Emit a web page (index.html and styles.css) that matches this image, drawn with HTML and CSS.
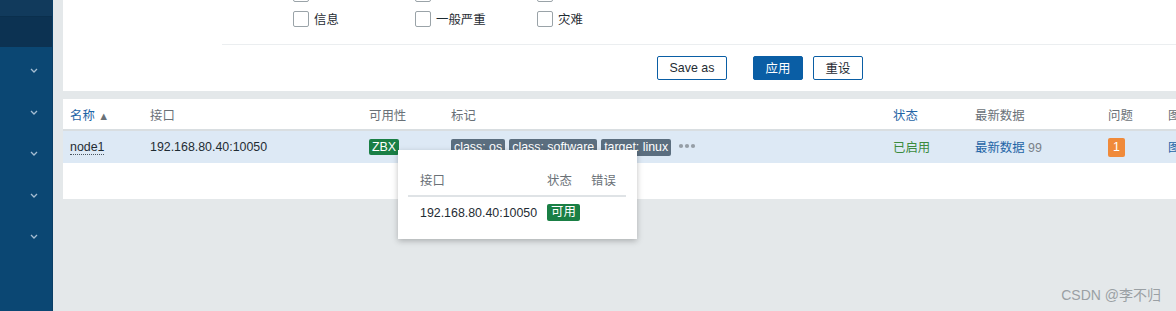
FILE: index.html
```html
<!DOCTYPE html>
<html lang="zh">
<head>
<meta charset="utf-8">
<link rel="stylesheet" href="styles.css">
</head>
<body>
<div class="app">
  <aside class="sidebar">
    <div class="sb-top"></div>
    <div class="sb-band"></div>
    <nav class="sb-menu">
      <div class="sb-item"><svg viewBox="0 0 8 5" class="chev"><path d="M1 1l3 3 3-3"/></svg></div>
      <div class="sb-item"><svg viewBox="0 0 8 5" class="chev"><path d="M1 1l3 3 3-3"/></svg></div>
      <div class="sb-item"><svg viewBox="0 0 8 5" class="chev"><path d="M1 1l3 3 3-3"/></svg></div>
      <div class="sb-item"><svg viewBox="0 0 8 5" class="chev"><path d="M1 1l3 3 3-3"/></svg></div>
      <div class="sb-item"><svg viewBox="0 0 8 5" class="chev"><path d="M1 1l3 3 3-3"/></svg></div>
    </nav>
  </aside>
  <main class="main">
    <section class="filter">
      <div class="sev">
        <div class="sev-label">严重性</div>
        <div class="sev-grid">
          <label class="cb"><span class="box"></span>未分类</label>
          <label class="cb"><span class="box"></span>警告</label>
          <label class="cb"><span class="box"></span>严重</label>
          <label class="cb"><span class="box"></span>信息</label>
          <label class="cb"><span class="box"></span>一般严重</label>
          <label class="cb"><span class="box"></span>灾难</label>
        </div>
      </div>
      <div class="sep"></div>
      <div class="actions">
        <button class="btn btn-alt save">Save as</button>
        <button class="btn btn-main">应用</button>
        <button class="btn btn-alt">重设</button>
      </div>
    </section>

    <section class="list">
      <table class="hosts">
        <colgroup>
          <col class="c1"><col class="c2"><col class="c3"><col class="c4"><col class="c5"><col class="c6"><col class="c7"><col>
        </colgroup>
        <thead>
          <tr>
            <th class="link">名称 <span class="arrow">▲</span></th>
            <th>接口</th>
            <th>可用性</th>
            <th>标记</th>
            <th class="link">状态</th>
            <th>最新数据</th>
            <th>问题</th>
            <th>图</th>
          </tr>
        </thead>
        <tbody>
          <tr class="row">
            <td><span class="node">node1</span></td>
            <td>192.168.80.40:10050</td>
            <td><span class="zbx">ZBX</span></td>
            <td class="tags"><span class="tag">class: os</span><span class="tag">class: software</span><span class="tag">target: linux</span><svg class="more" viewBox="0 0 18 6"><circle cx="3" cy="3" r="2.1"/><circle cx="9" cy="3" r="2.1"/><circle cx="15" cy="3" r="2.1"/></svg></td>
            <td class="enabled">已启用</td>
            <td><span class="link">最新数据</span> <span class="count">99</span></td>
            <td><span class="prob">1</span></td>
            <td class="link">图</td>
          </tr>
        </tbody>
      </table>

      <div class="popup">
        <table class="ptable">
          <thead>
            <tr><th>接口</th><th>状态</th><th>错误</th></tr>
          </thead>
          <tbody>
            <tr><td>192.168.80.40:10050</td><td><span class="ok">可用</span></td><td></td></tr>
          </tbody>
        </table>
      </div>
    </section>
    <div class="watermark">CSDN @李不归</div>
  </main>
</div>
</body>
</html>
```

FILE: styles.css
```css
* { box-sizing: border-box; }
html, body { margin: 0; padding: 0; }
body {
  background: #e4e8ea;
  font-family: "Liberation Sans", Arial, "Noto Sans CJK SC", sans-serif;
  font-size: 12.4px;
  color: #1f2c33;
  width: 1176px;
  height: 311px;
  overflow: hidden;
}
.app { display: flex; height: 311px; }

.sidebar {
  width: 53px;
  flex: 0 0 53px;
  display: flex;
  flex-direction: column;
  background: #0b4773;
  border-right: 1px solid #0a3e66;
}
.sb-top { height: 16px; background: #113a5c; }
.sb-band { height: 31px; background: #0c3252; border-top: 1px solid #0a2f4d; }
.sb-menu { display: flex; flex-direction: column; padding-top: 19px; }
.sb-item { height: 41.5px; display: flex; justify-content: flex-end; padding-right: 14px; }
.chev { width: 8px; height: 5px; margin-top: 2px; }
.chev path { fill: none; stroke: #a5bdd2; stroke-width: 1.3; }

.main { flex: 1; padding-left: 10px; position: relative; }

.filter {
  background: #fff;
  height: 91px;
  display: flex;
  flex-direction: column;
}
.sev { display: flex; margin-top: -14px; padding-left: 178px; }
.sev-label { width: 52px; color: #444; line-height: 16px; }
.sev-grid {
  display: grid;
  grid-template-columns: 122px 122px 122px;
  row-gap: 9px;
}
.cb { display: flex; align-items: center; height: 16px; color: #1f2c33; font-size: 12.4px; }
.box {
  width: 16px; height: 16px;
  border: 1px solid #9aa3a8;
  border-radius: 2px;
  background: #fff;
  margin-right: 5px;
}
.sep { margin: 17px 0 0 159px; border-top: 1px solid #ebeef0; }
.actions { display: flex; justify-content: flex-start; padding-left: 594px; margin-top: 11px; }
.btn {
  font-family: "Liberation Sans", Arial, "Noto Sans CJK SC", sans-serif;
  font-size: 12.4px;
  height: 24px;
  border-radius: 2px;
  padding: 0;
  cursor: pointer;
}
.btn-alt { background: #fff; border: 1px solid #0a5ea5; color: #1f2c33; width: 50px; margin-left: 10px; }
.btn-alt.save { width: 70px; margin-left: 0; margin-right: 26px; }
.btn-main { background: #0a5ea5; border: 1px solid #0a5ea5; color: #fff; width: 50px; }

.list {
  margin-top: 8px;
  background: #fff;
  height: 100px;
  position: relative;
}
.hosts { border-collapse: collapse; width: 100%; table-layout: fixed; }
.c1 { width: 80px; } .c2 { width: 219px; } .c3 { width: 82px; } .c4 { width: 442px; }
.c5 { width: 82px; } .c6 { width: 133px; } .c7 { width: 60px; }
.hosts th {
  text-align: left;
  font-weight: normal;
  color: #6a7177;
  height: 31px;
  padding: 1px 0 0 7px;
  border-bottom: 2px solid #d9dee1;
  white-space: nowrap;
}
.hosts th.link { color: #1f65a6; }
.arrow { font-size: 11px; color: #6a7177; vertical-align: 0; }
.hosts td {
  height: 33px;
  padding: 0 0 0 7px;
  white-space: nowrap;
  overflow: hidden;
}
.row { background: #dde9f5; }
.node { border-bottom: 1px dotted #4a5660; color: #1f2c33; }
.zbx {
  display: inline-block;
  background: #1a7f45;
  color: #fff;
  padding: 0 3px;
  line-height: 16px;
  border-radius: 2px;
}
.tags { font-size: 0; }
.tag {
  display: inline-block;
  font-size: 12.4px;
  background: #5b6e7f;
  color: #fff;
  line-height: 17px;
  padding: 0 3px;
  border-radius: 2px;
  margin-right: 4px;
}
.more { width: 18px; height: 6px; margin-left: 3px; vertical-align: 2px; }
.more circle { fill: #959ea6; }
.enabled { color: #3b8b3d; }
.link { color: #1f65a6; }
.count { color: #7a8187; }
.prob {
  display: inline-block;
  background: #f08a3a;
  color: #fff;
  width: 17px;
  text-align: center;
  line-height: 19px;
  border-radius: 2px;
}

.popup {
  position: absolute;
  left: 335px;
  top: 51px;
  width: 239px;
  height: 89px;
  background: #fff;
  box-shadow: 0 2px 6px rgba(0,0,0,0.25);
  padding: 19px 11px 0 10px;
}
.ptable { border-collapse: collapse; width: 100%; }
.ptable th {
  font-weight: normal;
  text-align: left;
  color: #6a7177;
  height: 27px;
  padding: 0 0 7px 0;
  border-bottom: 2px solid #dfe3e6;
  vertical-align: bottom;
  line-height: 14px;
}
.ptable th:first-child, .ptable td:first-child { padding-left: 12px; width: 139px; }
.ptable th:nth-child(2), .ptable td:nth-child(2) { width: 44px; }
.ptable td { height: 32px; padding: 0; vertical-align: middle; }
.ok {
  display: inline-block;
  background: #1a7f45;
  color: #fff;
  line-height: 17px;
  padding: 0 4px;
  border-radius: 2px;
}

.watermark {
  position: absolute;
  right: 15px;
  top: 284px;
  color: #9aa0a4;
  font-size: 14px;
}
```
